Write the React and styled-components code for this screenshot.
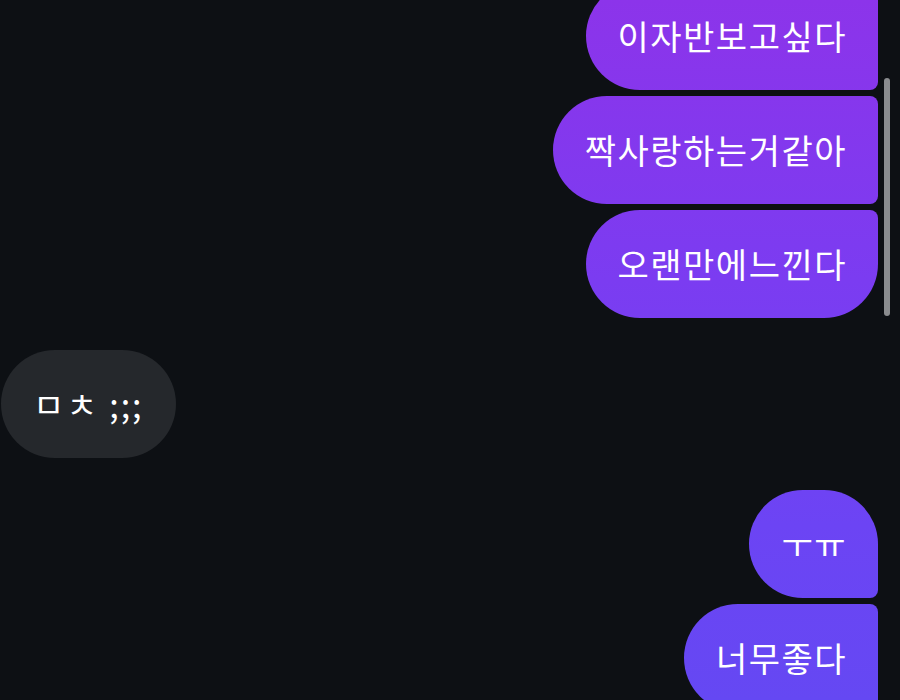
import React from "react";
import styled, { createGlobalStyle, css } from "styled-components";

const Global = createGlobalStyle`
  html, body {
    margin: 0;
    padding: 0;
    background: #0d1014;
    height: 100%;
    overflow: hidden;
  }
  #root { height: 100%; }
`;

const Screen = styled.div`
  position: relative;
  width: 900px;
  height: 700px;
  overflow: hidden;
  background: #0d1014;
  font-family: "Noto Sans CJK KR", "Noto Sans", sans-serif;
`;

const Thread = styled.div`
  display: flex;
  flex-direction: column;
  gap: 32px;
  margin-top: -18px;
  padding: 0 22px 0 1px;
`;

const Group = styled.div`
  display: flex;
  flex-direction: column;
  align-items: ${(p) => (p.$mine ? "flex-end" : "flex-start")};
  gap: 6px;
`;

const BIG = "54px";
const SMALL = "8px";

const radii = {
  single: `${BIG} ${BIG} ${BIG} ${BIG}`,
  first: `${BIG} ${BIG} ${SMALL} ${BIG}`,
  middle: `${BIG} ${SMALL} ${SMALL} ${BIG}`,
  last: `${BIG} ${SMALL} ${BIG} ${BIG}`,
};

const Bubble = styled.div`
  box-sizing: border-box;
  height: 108px;
  padding: 0 32px;
  display: flex;
  align-items: center;
  color: #ffffff;
  font-size: 34px;
  line-height: 44px;
  font-weight: 400;
  white-space: nowrap;
  border-radius: ${(p) => radii[p.$pos || "single"]};
  ${(p) =>
    p.$mine
      ? css`
          letter-spacing: 1.5px;
          padding-right: 31px;
          background: linear-gradient(180deg, #8c34ea 0%, #7b3cf1 40%, #6c44f4 75%, #6548f3 100%);
          background-attachment: fixed;
        `
      : css`
          letter-spacing: 2px;
          background: #25282c;
        `}
`;

const Scrollbar = styled.div`
  position: absolute;
  right: 10px;
  top: 78px;
  width: 6px;
  height: 238px;
  border-radius: 3px;
  background: #8a8c8f;
`;

const groups = [
  {
    mine: true,
    items: [
      { text: "이자반보고싶다", pos: "middle" },
      { text: "짝사랑하는거같아", pos: "middle" },
      { text: "오랜만에느낀다", pos: "last" },
    ],
  },
  { mine: false, items: [{ text: "ㅁㅊ ;;;", pos: "single" }] },
  {
    mine: true,
    items: [
      { text: "ㅜㅠ", pos: "first" },
      { text: "너무좋다", pos: "middle" },
    ],
  },
];

export default function App() {
  return (
    <>
      <Global />
      <Screen>
        <Thread>
          {groups.map((g, i) => (
            <Group key={i} $mine={g.mine}>
              {g.items.map((m, j) => (
                <Bubble key={j} $mine={g.mine} $pos={m.pos}>
                  {m.text}
                </Bubble>
              ))}
            </Group>
          ))}
        </Thread>
        <Scrollbar />
      </Screen>
    </>
  );
}
